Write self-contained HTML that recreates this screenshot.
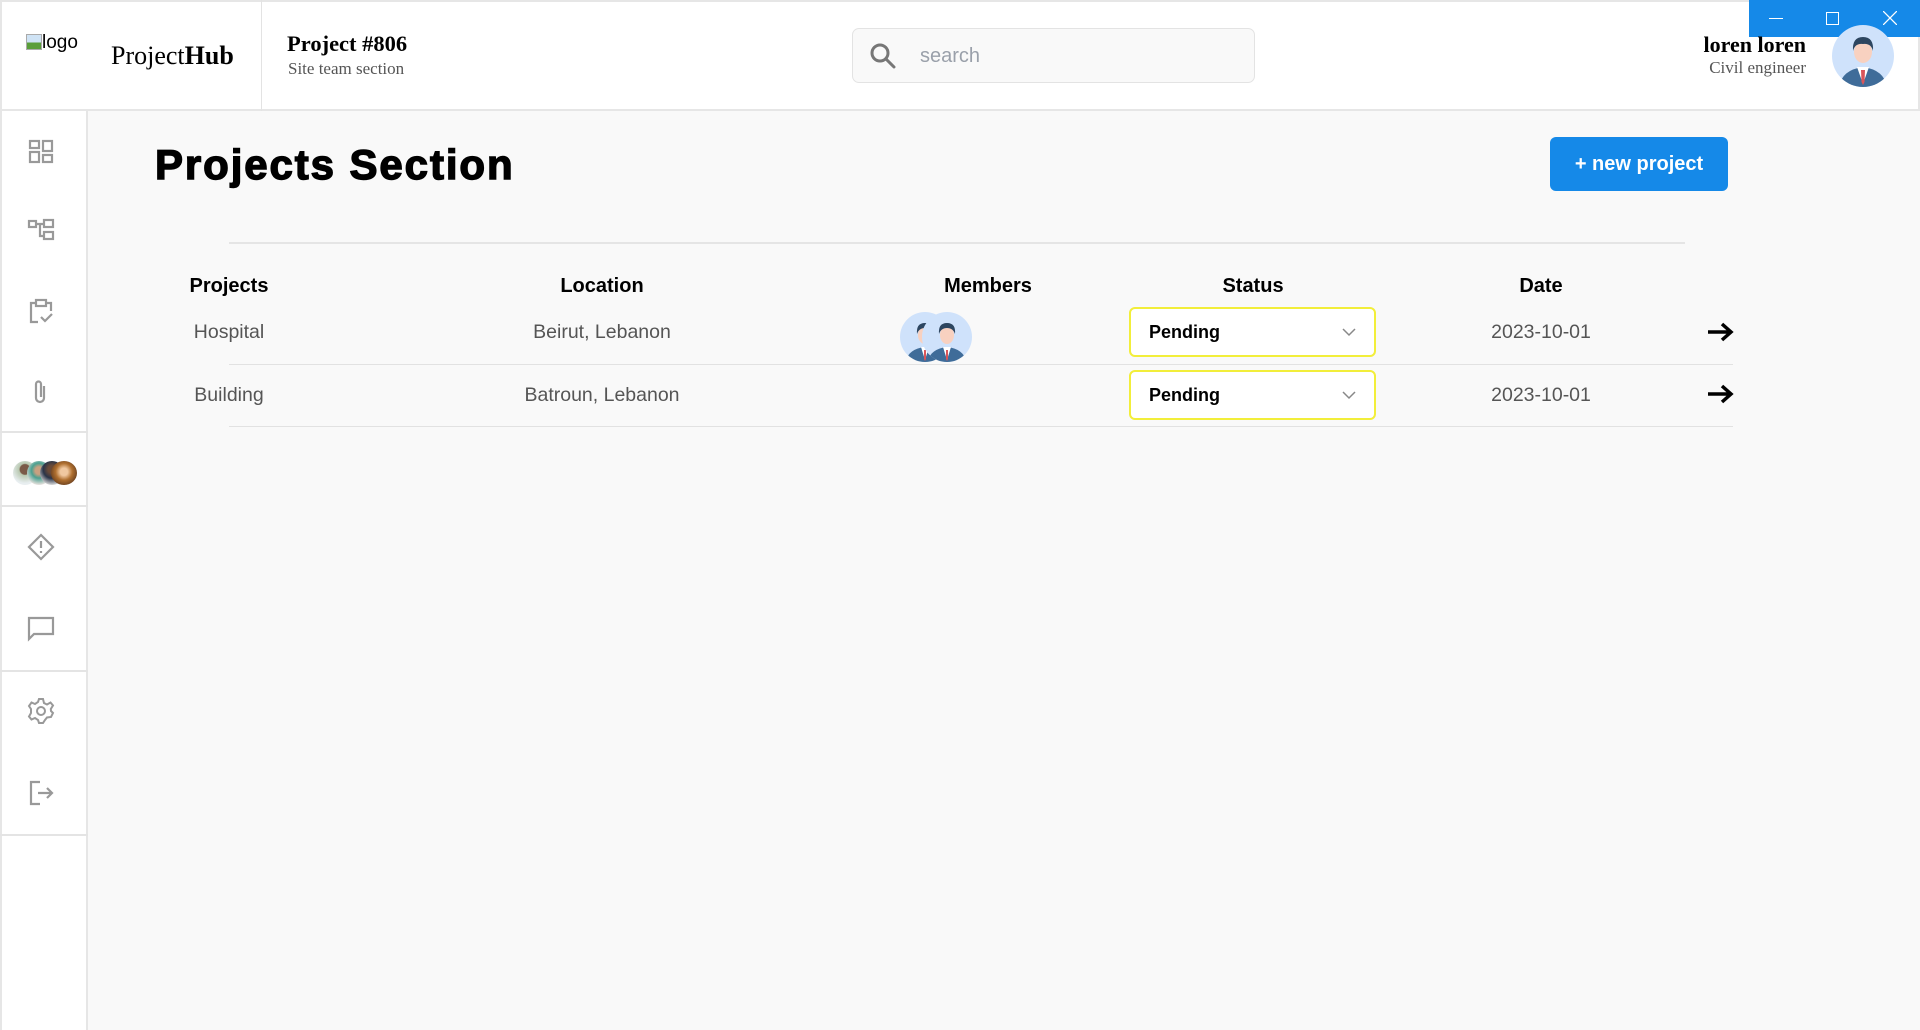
<!DOCTYPE html>
<html><head><meta charset="utf-8"><style>
*{box-sizing:border-box;margin:0;padding:0}
body{width:1920px;height:1030px;background:#f9f9f9;font-family:"Liberation Sans",Arial,sans-serif;position:relative;overflow:hidden}
.a{position:absolute}
.hdr{left:0;top:0;width:1920px;height:111px;background:#fff;border:2px solid #e6e6e6;border-bottom:2px solid #e6e6e6}
.side{left:0;top:111px;width:88px;height:919px;background:#fff;border-left:2px solid #e6e6e6;border-right:2px solid #e6e6e6}
.sep{left:0;width:88px;height:2px;background:#e4e4e4}
.ic{left:26px;width:30px;height:30px}
.th{font-weight:bold;font-size:20px;color:#000;transform:translateX(-50%);top:275px}
.td{font-size:19.5px;color:#555;transform:translateX(-50%)}
.sel{left:1129px;width:247px;height:50px;background:#fff;border:2px solid #f2ee3a;border-radius:6px;font-weight:bold;font-size:18px;padding:13px 0 0 18px}
.sel svg{position:absolute;right:18px;top:18px}
.rl{left:229px;width:1504px;height:1px;background:#e2e2e2}
</style></head><body>
<div class="a hdr"></div>
<div class="a" style="left:261px;top:0;width:1px;height:111px;background:#e3e3e3"></div>
<div class="a" style="left:26px;top:32px;font-size:19px;color:#000"><span style="display:inline-block;width:16px;height:16px;border:1px solid #aaa;background:linear-gradient(#cfe3f5 55%,#5a9e3a 55%);vertical-align:-2px"></span>logo</div>
<div class="a" style="left:111px;top:41px;font-family:'Liberation Serif',serif;font-size:26px">Project<b>Hub</b></div>
<div class="a" style="left:287px;top:31px;font-family:'Liberation Serif',serif;font-size:22.5px;font-weight:bold">Project #806</div>
<div class="a" style="left:288px;top:59px;font-family:'Liberation Serif',serif;font-size:17px;color:#555">Site team section</div>
<div class="a" style="left:852px;top:28px;width:403px;height:55px;background:#f9f9f9;border:1px solid #e3e3e3;border-radius:7px"></div>
<svg class="a" style="left:869px;top:42px" width="28" height="28" viewBox="0 0 28 28"><circle cx="11" cy="11" r="8" fill="none" stroke="#777" stroke-width="3"/><line x1="17" y1="17" x2="25" y2="25" stroke="#777" stroke-width="3" stroke-linecap="round"/></svg>
<div class="a" style="left:920px;top:45px;font-size:20px;color:#9aa0aa">search</div>
<div class="a" style="left:1749px;top:0;width:171px;height:37px;background:#1589e8"></div>
<div class="a" style="left:1769px;top:18px;width:14px;height:1px;background:#fff"></div>
<div class="a" style="left:1826px;top:12px;width:13px;height:13px;border:1px solid #fff"></div>
<svg class="a" style="left:1883px;top:11px" width="14" height="14"><path d="M0 0L14 14M14 0L0 14" stroke="#fff" stroke-width="1.3"/></svg>
<div class="a" style="right:114px;top:32px;font-family:'Liberation Serif',serif;font-size:22px;font-weight:bold">loren loren</div>
<div class="a" style="right:114px;top:58px;font-family:'Liberation Serif',serif;font-size:17px;color:#555">Civil engineer</div>
<svg class="a" style="left:1831px;top:24px" width="64" height="64" viewBox="0 0 64 64"><defs><clipPath id="c0"><circle cx="32" cy="32" r="31"/></clipPath></defs><circle cx="32" cy="32" r="31" fill="#cfe2fb"/><g clip-path="url(#c0)"><path d="M8 64 Q10 46 32 43 Q54 46 56 64Z" fill="#3f6c99"/><path d="M26 43 L32 60 L38 43Z" fill="#fff"/><path d="M30 46 L34 46 L33.5 58 L32 61 L30.5 58Z" fill="#d9555a"/><ellipse cx="32" cy="28" rx="9" ry="11" fill="#f8d1c0"/><path d="M22 27 Q21 13 32 13 Q43 13 42 27 Q40 19 32 20 Q24 19 22 27Z" fill="#2d4660"/></g></svg>

<div class="a side"></div>
<svg class="a ic" style="top:137px" viewBox="0 0 30 30" fill="none" stroke="#999" stroke-width="2.2"><rect x="4" y="4" width="9" height="7"/><rect x="4" y="15" width="9" height="10"/><rect x="17" y="4" width="9" height="10"/><rect x="17" y="18" width="9" height="7"/></svg>
<svg class="a ic" style="top:216px" viewBox="0 0 30 30" fill="none" stroke="#999" stroke-width="2.2"><rect x="3" y="5" width="7" height="6"/><rect x="18" y="4" width="9" height="7"/><rect x="18" y="16" width="9" height="7"/><path d="M10 8H14V20H18M14 8H18"/></svg>
<svg class="a ic" style="top:296px" viewBox="0 0 30 30" fill="none" stroke="#999" stroke-width="2.2"><path d="M12 26H5V7H10M20 7H25V15"/><rect x="10" y="4" width="10" height="6"/><path d="M15 21L19 25L26 18"/></svg>
<svg class="a ic" style="top:377px" viewBox="0 0 30 30" fill="none" stroke="#999" stroke-width="2.2"><path d="M18 9V21A4 4 0 0 1 10 21V7A2.5 2.5 0 0 1 15 7V20"/></svg>
<div class="a sep" style="top:431px"></div>
<div class="a" style="left:13px;top:461px;width:64px;height:24px">
<span class="a" style="left:0;top:0;width:24px;height:24px;border-radius:50%;background:radial-gradient(circle at 50% 35%,#7a5a48 25%,#b8c8b0 30%,#e8eef0 70%)"></span>
<span class="a" style="left:14px;top:0;width:24px;height:24px;border-radius:50%;background:radial-gradient(circle at 50% 40%,#c8a080 20%,#4aa090 40%,#e4e0dc 75%)"></span>
<span class="a" style="left:27px;top:0;width:24px;height:24px;border-radius:50%;background:radial-gradient(circle at 50% 35%,#6a4a38 20%,#2a3448 45%,#ddd 80%)"></span>
<span class="a" style="left:38px;top:0;width:26px;height:24px;border-radius:50%;background:radial-gradient(circle at 50% 45%,#f0c8a0 20%,#b07030 45%,#4a2a18 90%)"></span>
</div>
<div class="a sep" style="top:505px"></div>
<svg class="a ic" style="top:532px" viewBox="0 0 30 30" fill="none" stroke="#999" stroke-width="2.2"><path d="M15 3L27 15L15 27L3 15Z"/><path d="M15 9V16M15 19V21"/></svg>
<svg class="a ic" style="top:613px" viewBox="0 0 30 30" fill="none" stroke="#999" stroke-width="2.2"><path d="M3 5H27V21H8L3 26Z"/></svg>
<div class="a sep" style="top:670px"></div>
<svg class="a ic" style="top:696px" viewBox="0 0 30 30" fill="none" stroke="#999" stroke-width="2"><circle cx="15" cy="15" r="4"/><path d="M13 3H17L18 7L21 8.5L24.5 6.5L27 9.5L24.8 13L25 15L27 17L25 21L21 21.5L19 24L17 27H13L12 24L9 22L5.5 23.5L3 20.5L5 17L5 13L3 10L5.5 6.5L9 8L12 6Z"/></svg>
<svg class="a ic" style="top:778px" viewBox="0 0 30 30" fill="none" stroke="#999" stroke-width="2.2"><path d="M14 4H5V26H14M12 15H26M21 10L26 15L21 20"/></svg>
<div class="a sep" style="top:834px"></div>

<div class="a" style="left:155px;top:141px;font-size:42px;font-weight:900;letter-spacing:1.9px;-webkit-text-stroke:1.4px #000">Projects Section</div>
<div class="a" style="left:1550px;top:137px;width:178px;height:54px;background:#1589e8;border-radius:6px;color:#fff;font-weight:bold;font-size:20px;text-align:center;line-height:54px">+ new project</div>
<div class="a" style="left:229px;top:242px;width:1456px;height:2px;background:#e5e5e5"></div>

<div class="a th" style="left:229px">Projects</div>
<div class="a th" style="left:602px">Location</div>
<div class="a th" style="left:988px">Members</div>
<div class="a th" style="left:1253px">Status</div>
<div class="a th" style="left:1541px">Date</div>

<div class="a td" style="left:229px;top:321px">Hospital</div>
<div class="a td" style="left:602px;top:321px">Beirut, Lebanon</div>
<svg class="a" style="left:900px;top:312px" width="72" height="52" viewBox="0 0 72 52"><defs><clipPath id="c1"><circle cx="25" cy="25" r="25"/></clipPath><clipPath id="c2"><circle cx="47" cy="25" r="25"/></clipPath></defs>
<circle cx="25" cy="25" r="25" fill="#cfe2fb"/><g clip-path="url(#c1)"><path d="M5 52Q7 37 25 35Q43 37 45 52Z" fill="#3f6c99"/><path d="M21 35L25 48L29 35Z" fill="#fff"/><path d="M24 38H26L26 47L25 49L24 47Z" fill="#d9555a"/><ellipse cx="25" cy="23" rx="7" ry="9" fill="#f8d1c0"/><path d="M17 22Q16 11 25 11Q34 11 33 22Q31 16 25 16Q19 16 17 22Z" fill="#2d4660"/></g>
<circle cx="47" cy="25" r="25" fill="#cfe2fb"/><g clip-path="url(#c2)"><path d="M27 52Q29 37 47 35Q65 37 67 52Z" fill="#3f6c99"/><path d="M43 35L47 48L51 35Z" fill="#fff"/><path d="M46 38H48L48 47L47 49L46 47Z" fill="#d9555a"/><ellipse cx="47" cy="23" rx="7" ry="9" fill="#f8d1c0"/><path d="M39 22Q38 11 47 11Q56 11 55 22Q53 16 47 16Q41 16 39 22Z" fill="#2d4660"/></g></svg>
<div class="a sel" style="top:307px">Pending<svg width="14" height="10"><path d="M1 2L7 8L13 2" fill="none" stroke="#888" stroke-width="1.5"/></svg></div>
<div class="a td" style="left:1541px;top:321px">2023-10-01</div>
<svg class="a" style="left:1707px;top:322px" width="28" height="20"><path d="M1 10H24M15 2L24 10L15 18" fill="none" stroke="#000" stroke-width="3.5"/></svg>
<div class="a rl" style="top:364px"></div>

<div class="a td" style="left:229px;top:384px">Building</div>
<div class="a td" style="left:602px;top:384px">Batroun, Lebanon</div>
<div class="a sel" style="top:370px">Pending<svg width="14" height="10"><path d="M1 2L7 8L13 2" fill="none" stroke="#888" stroke-width="1.5"/></svg></div>
<div class="a td" style="left:1541px;top:384px">2023-10-01</div>
<svg class="a" style="left:1707px;top:384px" width="28" height="20"><path d="M1 10H24M15 2L24 10L15 18" fill="none" stroke="#000" stroke-width="3.5"/></svg>
<div class="a rl" style="top:426px"></div>
</body></html>
